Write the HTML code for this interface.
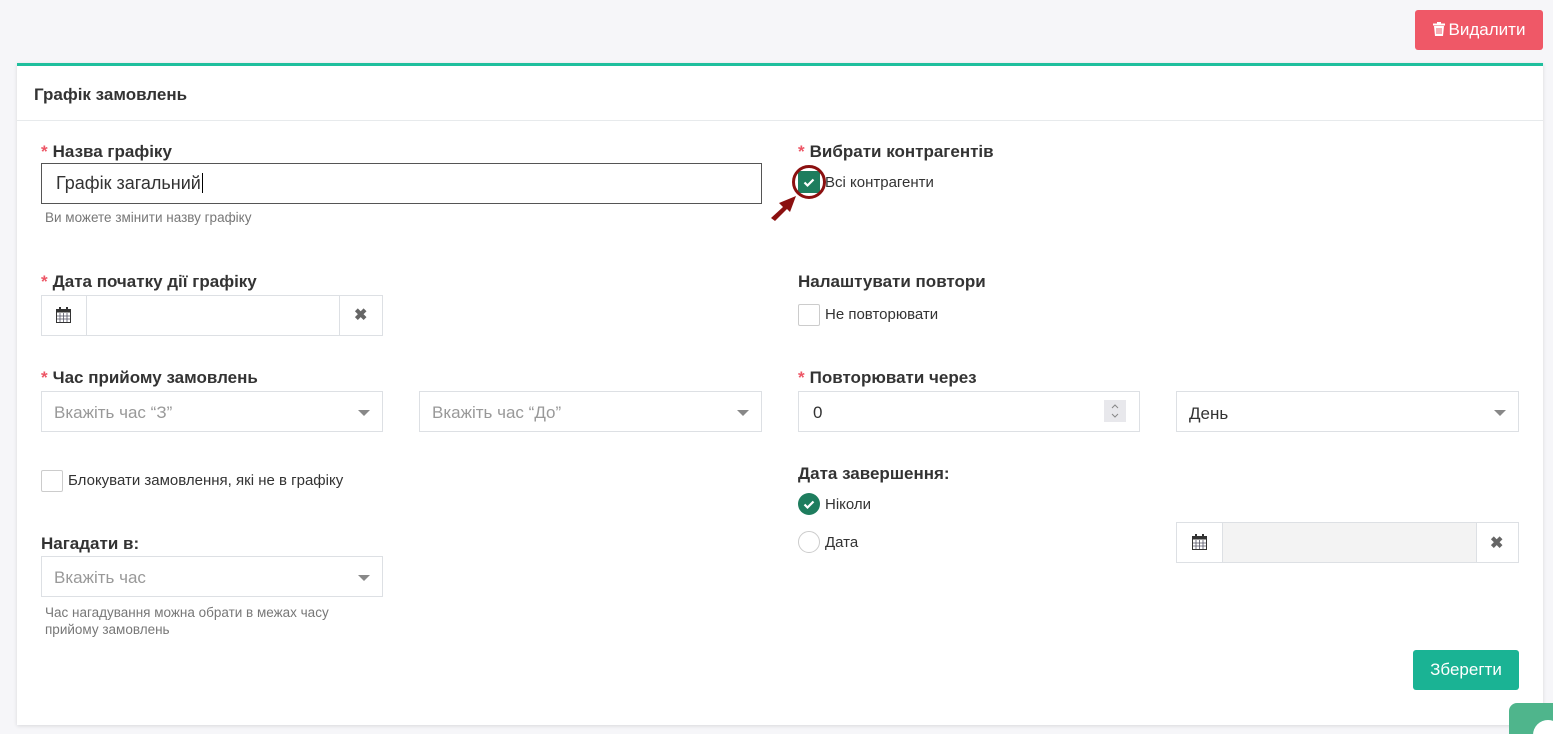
<!DOCTYPE html>
<html><head><meta charset="utf-8"><style>
html,body{margin:0;width:1553px;height:734px;overflow:hidden}
body{background:#f6f6f9;font-family:"Liberation Sans",sans-serif;position:relative;color:#333}
.a{position:absolute}
.card{left:17px;top:63px;width:1526px;height:659px;background:#fff;border-top:3px solid #1fbf9d;box-shadow:0 1px 4px rgba(0,0,0,.12)}
.lbl{font-weight:bold;font-size:17px;color:#333}
.lbl .s{color:#ed5565;margin-right:5px}
.box{border:1px solid #dde0e4;background:#fff;box-sizing:border-box}
.ph{color:#999;font-size:17px}
.help{font-size:13.5px;color:#777}
.caret{position:absolute;right:12px;top:18px;border-left:6px solid transparent;border-right:6px solid transparent;border-top:6px solid #888}
.cb{width:20px;height:20px;border:1px solid #ccc;border-radius:2px;box-sizing:border-box;background:#fff}
.txt{font-size:15px;color:#333}
</style></head><body>
<div class="a" style="left:1415px;top:10px;width:128px;height:40px;background:#ef5867;border-radius:3px;color:#fff;font-size:17px;line-height:40px;text-align:center"><svg width="12" height="14" viewBox="0 0 12 14" style="vertical-align:-1px;margin-right:4px"><rect x="0" y="1.5" width="12" height="2" fill="#fff"/><rect x="4" y="0" width="4" height="2" fill="#fff"/><path d="M1 4h10l-1 10H2z" fill="#fff"/><path d="M4 6v6M6 6v6M8 6v6" stroke="#ef5867" stroke-width="1"/></svg>Видалити</div>
<div class="a card"></div>
<div class="a" style="left:17px;top:120px;width:1526px;height:1px;background:#e7eaec"></div>
<div class="a" style="left:34px;top:85px;font-size:17px;font-weight:bold;color:#333">Графік замовлень</div>

<div class="a lbl" style="left:41px;top:142px"><span class="s">*</span>Назва графіку</div>
<div class="a box" style="left:41px;top:163px;width:721px;height:41px;border-color:#555;padding:9px 14px;font-size:18px">Графік загальний<span style="border-left:1px solid #000;margin-left:1px"></span></div>
<div class="a help" style="left:45px;top:210px">Ви можете змінити назву графіку</div>

<div class="a lbl" style="left:41px;top:272px"><span class="s">*</span>Дата початку дії графіку</div>
<div class="a box" style="left:41px;top:295px;width:342px;height:41px"></div>
<div class="a" style="left:86px;top:296px;width:1px;height:39px;background:#dde0e4"></div>
<div class="a" style="left:339px;top:296px;width:1px;height:39px;background:#dde0e4"></div>
<svg class="a" style="left:56px;top:307px" width="15" height="16" viewBox="0 0 15 16"><rect x="0.5" y="2.5" width="14" height="13" fill="none" stroke="#333"/><rect x="0.5" y="2.5" width="14" height="3" fill="#333"/><rect x="3" y="0" width="2" height="4" fill="#333"/><rect x="10" y="0" width="2" height="4" fill="#333"/><path d="M4 6v9M7.5 6v9M11 6v9M1 9h13M1 12h13" stroke="#556" stroke-width=".8"/></svg>
<div class="a" style="left:354px;top:305px;font-size:16px;font-weight:bold;color:#666">✖</div>

<div class="a lbl" style="left:41px;top:368px"><span class="s">*</span>Час прийому замовлень</div>
<div class="a box" style="left:41px;top:391px;width:342px;height:41px"><span class="a ph" style="left:12px;top:11px">Вкажіть час “З”</span><span class="caret"></span></div>
<div class="a box" style="left:419px;top:391px;width:343px;height:41px"><span class="a ph" style="left:12px;top:11px">Вкажіть час “До”</span><span class="caret"></span></div>

<div class="a cb" style="left:41px;top:470px;width:22px;height:22px"></div>
<div class="a txt" style="left:68px;top:472px">Блокувати замовлення, які не в графіку</div>

<div class="a lbl" style="left:41px;top:534px">Нагадати в:</div>
<div class="a box" style="left:41px;top:556px;width:342px;height:41px"><span class="a ph" style="left:12px;top:11px">Вкажіть час</span><span class="caret"></span></div>
<div class="a help" style="left:45px;top:604px;line-height:17px">Час нагадування можна обрати в межах часу<br>прийому замовлень</div>

<div class="a lbl" style="left:798px;top:142px"><span class="s">*</span>Вибрати контрагентів</div>
<svg class="a" style="left:798px;top:171px" width="22" height="22"><rect width="22" height="22" rx="2" fill="#1e7d5e"/><path d="M6.5 11.5l3 3 6-6" stroke="#fff" stroke-width="2.2" fill="none"/></svg>
<div class="a" style="left:792px;top:165px;width:28px;height:28px;border:3px solid #8b1010;border-radius:50%"></div>
<svg class="a" style="left:768px;top:192px" width="34" height="32"><path d="M3 26 L15 15 L11 11 L28 4 L22 20 L19 17 L7 29Z" fill="#8b1010"/></svg>
<div class="a txt" style="left:825px;top:174px">Всі контрагенти</div>

<div class="a lbl" style="left:798px;top:272px">Налаштувати повтори</div>
<div class="a cb" style="left:798px;top:304px;width:22px;height:22px"></div>
<div class="a txt" style="left:825px;top:306px">Не повторювати</div>

<div class="a lbl" style="left:798px;top:368px"><span class="s">*</span>Повторювати через</div>
<div class="a box" style="left:798px;top:391px;width:342px;height:41px"><span class="a" style="left:14px;top:11px;font-size:17px">0</span><svg class="a" style="left:305px;top:8px" width="22" height="22"><rect width="22" height="22" fill="#e8e8ec"/><path d="M8 8l3-3 3 3M8 14l3 3 3-3" stroke="#888" fill="none"/></svg></div>
<div class="a box" style="left:1176px;top:391px;width:343px;height:41px"><span class="a" style="left:12px;top:12px;font-size:17px">День</span><span class="caret"></span></div>

<div class="a lbl" style="left:798px;top:464px">Дата завершення:</div>
<svg class="a" style="left:798px;top:493px" width="22" height="22"><circle cx="11" cy="11" r="11" fill="#1e7d5e"/><path d="M6.5 11.5l3 3 6-6" stroke="#fff" stroke-width="2.2" fill="none"/></svg>
<div class="a txt" style="left:825px;top:496px">Ніколи</div>
<div class="a" style="left:798px;top:531px;width:22px;height:22px;border:1px solid #ccc;border-radius:50%;box-sizing:border-box"></div>
<div class="a txt" style="left:825px;top:534px">Дата</div>
<div class="a box" style="left:1176px;top:522px;width:343px;height:41px"></div>
<div class="a" style="left:1222px;top:523px;width:253px;height:39px;background:#f3f3f3;border-left:1px solid #dde0e4;border-right:1px solid #dde0e4"></div>
<svg class="a" style="left:1192px;top:534px" width="15" height="16" viewBox="0 0 15 16"><rect x="0.5" y="2.5" width="14" height="13" fill="none" stroke="#333"/><rect x="0.5" y="2.5" width="14" height="3" fill="#333"/><rect x="3" y="0" width="2" height="4" fill="#333"/><rect x="10" y="0" width="2" height="4" fill="#333"/><path d="M4 6v9M7.5 6v9M11 6v9M1 9h13M1 12h13" stroke="#556" stroke-width=".8"/></svg>
<div class="a" style="left:1490px;top:533px;font-size:16px;font-weight:bold;color:#666">✖</div>

<div class="a" style="left:1413px;top:650px;width:106px;height:40px;background:#1ab394;border-radius:3px;color:#fff;font-size:17px;text-align:center;line-height:40px">Зберегти</div>
<div class="a" style="left:1509px;top:703px;width:60px;height:50px;background:#4fb58c;border-radius:8px"></div>
<div class="a" style="left:1533px;top:720px;width:30px;height:30px;background:#fff;border-radius:50%"></div>
</body></html>
